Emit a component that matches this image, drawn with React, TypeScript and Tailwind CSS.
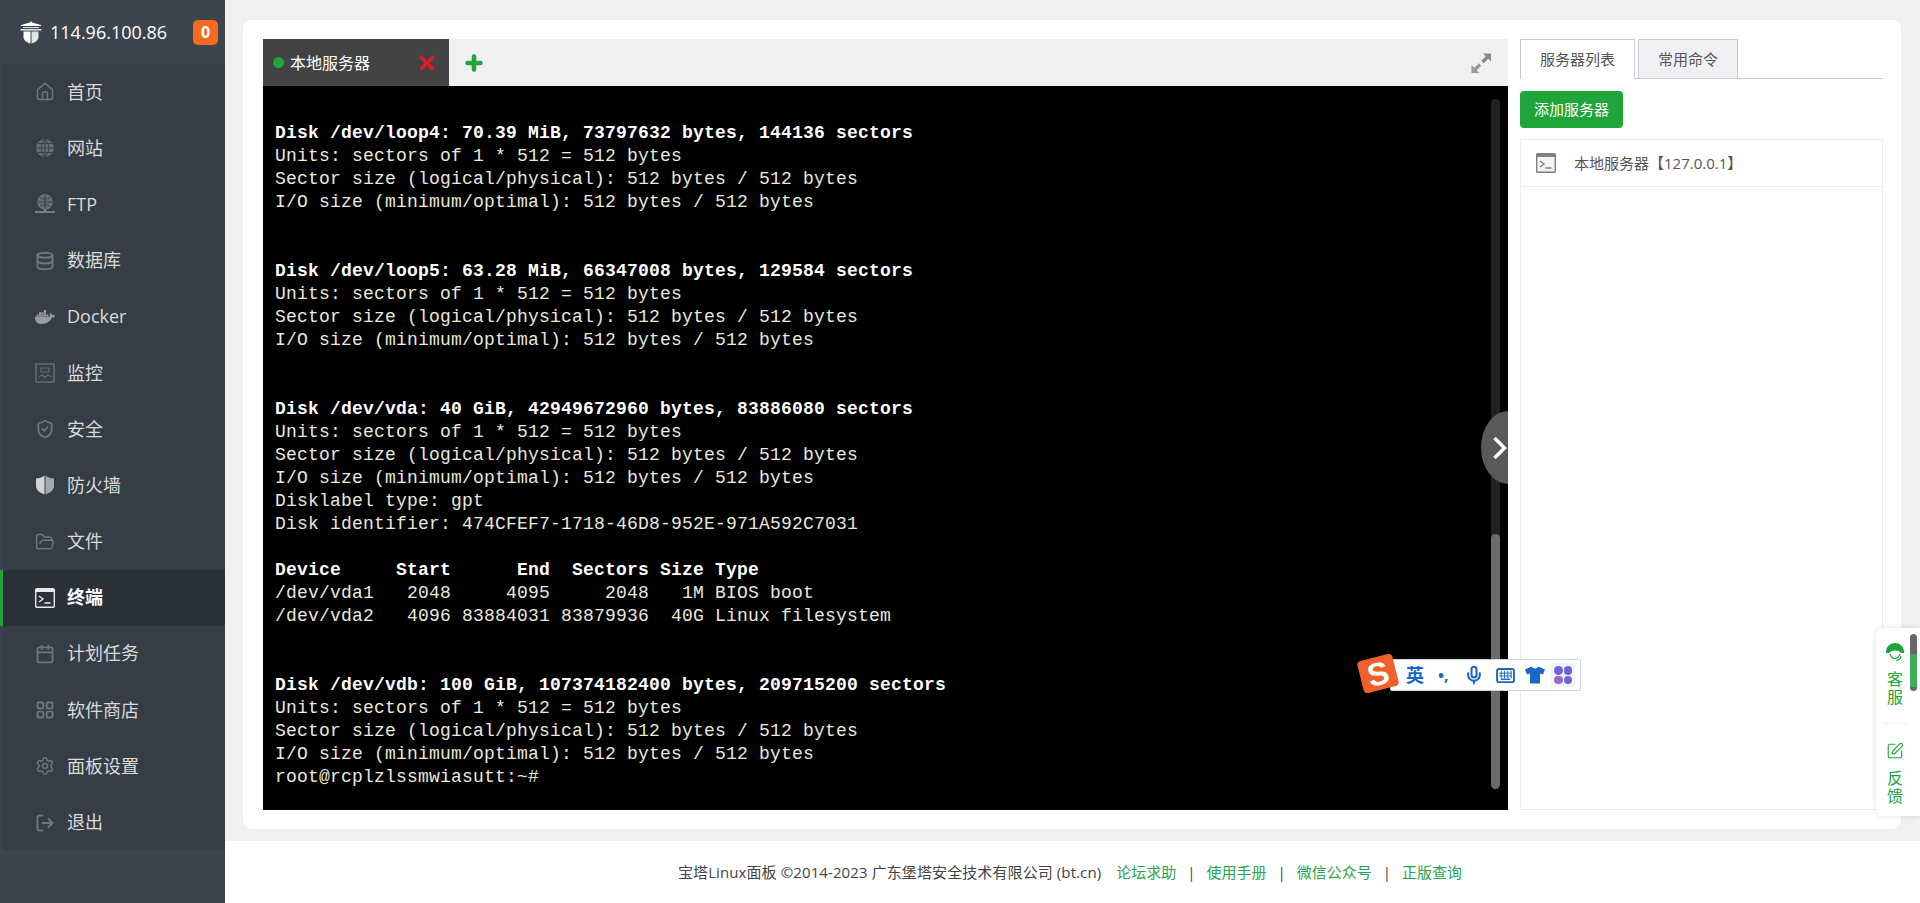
import React from 'react';
import { Home, Database, ShieldCheck, FolderOpen, Calendar, LayoutGrid, Settings, LogOut, X, Plus, Mic, SquarePen } from 'lucide-react';
import { FaDocker } from 'react-icons/fa';

const FONT = "font-['Open_Sans','Noto_Sans_CJK_SC',sans-serif]";

const LogoIcon = () => (
  <svg viewBox="0 0 24 24" className="w-[24px] h-[24px]" fill="#fff">
    <path d="M12 1l1 1.600 9 2.400v1.100H2V5l9-2.400z" />
    <path d="M4 7.200h16v.900H4z" />
    <path d="M1.500 9.200h21v1.300h-21z" />
    <path d="M4.500 11.500h7v12c-3.500-.800-6-2.800-7-5.500z" />
    <path d="M12.500 11.500h7V18c-1 2.700-3.500 4.700-7 5.500z" opacity=".85" />
  </svg>
);

const GlobeIcon = () => (
  <svg viewBox="0 0 20 20" className="w-[20px] h-[20px]" fill="none">
    <circle cx="10" cy="10" r="9" fill="#666c72" />
    <path d="M1 10h18M10 1v18M3 5.500h14M3 14.500h14M10 1c-5 5-5 13 0 18M10 1c5 5 5 13 0 18" stroke="#363d44" strokeWidth="0.900" />
  </svg>
);

const FtpIcon = () => (
  <svg viewBox="0 0 20 20" className="w-[20px] h-[20px]" fill="none" stroke="#6f757b" strokeWidth="1.400">
    <circle cx="10" cy="8" r="7" fill="#666c72" />
    <path d="M3 8h14M10 1v14M5 3.500c3 2 7 2 10 0M5 12.500c3-2 7-2 10 0" stroke="#363d44" strokeWidth="0.900" />
    <path d="M0 18h20M10 15v3" strokeWidth="1.500" stroke="#8a8f94" />
  </svg>
);

const MonitorIcon = () => (
  <svg viewBox="0 0 20 20" className="w-[20px] h-[20px]" fill="none" stroke="#666c72" strokeWidth="1.500">
    <rect x="1" y="1" width="18" height="18" />
    <path d="M6 5h8v4H6zM3.500 14l3.500-2 3 2.500 3-2.500 3.500 2" strokeWidth="1.200" />
  </svg>
);

const HalfShieldIcon = () => (
  <svg viewBox="0 0 20 20" className="w-[20px] h-[20px]">
    <path d="M9.500 0.500v19C5 18 1 15 1 11V3.500C4 3.500 7 2.500 9.500 0.500z" fill="#d2d3d4" />
    <path d="M10.500 0.500c2.500 2 5.500 3 8.500 3V11c0 4-4 7-8.500 8.500z" fill="#a4a7aa" />
  </svg>
);

const TerminalIcon = ({ active }: { active?: boolean }) => (
  <svg viewBox="0 0 20 20" className="w-[20px] h-[20px]" fill="none">
    <rect x="0.700" y="0.700" width="18.600" height="18.600" rx="1" stroke={active ? '#e8e8e8' : '#808080'} strokeWidth="1.400" fill={active ? '#2c3138' : '#f4f4f4'} />
    <path d="M0.700 1h18.600v3H0.700z" fill={active ? '#e8e8e8' : '#808080'} />
    <path d="M4 8l4 3-4 3M9.500 15h6" stroke={active ? '#e8e8e8' : '#808080'} strokeWidth="1.400" />
  </svg>
);

const FullscreenIcon = () => (
  <svg viewBox="0 0 22 22" className="w-[22px] h-[22px]" fill="#8a8a8a">
    <path d="M13 1.500h8v8l-2.800-2.800-4.500 4.500-2.400-2.400 4.500-4.500z" />
    <path d="M9.500 21H1.500v-8l2.800 2.800 4.500-4.500 2.400 2.400-4.500 4.500z" opacity=".85" />
  </svg>
);

const KeyboardIcon = () => (
  <svg viewBox="0 0 20 16" className="w-[19px] h-[15px]" fill="none" stroke="#1767c4">
    <rect x="1" y="1" width="18" height="14" rx="2" strokeWidth="2" />
    <path d="M3 5.500h14M3 8.500h14M5.500 3v8M9 3v8M12.500 3v8M16 3v8" strokeWidth="1" />
    <path d="M5 12h10" strokeWidth="1.500" />
  </svg>
);

const TshirtIcon = () => (
  <svg viewBox="0 0 20 18" className="w-[20px] h-[18px]" fill="#1767c4">
    <path d="M6.500 0.500c1 1.500 2 2 3.500 2s2.500-.500 3.500-2L20 3.500l-2 5-3-1v10H5v-10l-3 1-2-5z" />
  </svg>
);

const HeadsetIcon = () => (
  <svg viewBox="0 0 20 20" className="w-[20px] h-[20px]">
    <path d="M1 8a8.500 7.500 0 0 1 18 0v2h-3c-2-3-6-3-9-2-1 .300-2 1-3 2H1z" fill="#20a53a" />
    <path d="M5 11c1 3 3 4.500 5 4.500s4-1.500 5-4.500" fill="none" stroke="#20a53a" strokeWidth="1.200" />
    <path d="M16 13c0 3-2 4-5 4.500" fill="none" stroke="#20a53a" strokeWidth="1.200" />
  </svg>
);

const icon = 'w-[20px] h-[20px] text-[#6f757b]';
const menu = [
  { label: '首页', icon: <Home className={icon} strokeWidth={1.800} /> },
  { label: '网站', icon: <GlobeIcon /> },
  { label: 'FTP', icon: <FtpIcon /> },
  { label: '数据库', icon: <Database className={icon} strokeWidth={2.400} /> },
  { label: 'Docker', icon: <FaDocker className="w-[20px] h-[20px] text-[#9a9ea2]" /> },
  { label: '监控', icon: <MonitorIcon /> },
  { label: '安全', icon: <ShieldCheck className={icon} strokeWidth={2.200} /> },
  { label: '防火墙', icon: <HalfShieldIcon /> },
  { label: '文件', icon: <FolderOpen className={icon} strokeWidth={1.800} /> },
  { label: '终端', icon: <TerminalIcon active />, active: true },
  { label: '计划任务', icon: <Calendar className={icon} strokeWidth={2.200} /> },
  { label: '软件商店', icon: <LayoutGrid className={icon} strokeWidth={2.200} /> },
  { label: '面板设置', icon: <Settings className={icon} strokeWidth={1.800} /> },
  { label: '退出', icon: <LogOut className={icon} strokeWidth={2.200} /> },
];

const disk = (title: string) => [
  { t: title, b: true },
  { t: 'Units: sectors of 1 * 512 = 512 bytes' },
  { t: 'Sector size (logical/physical): 512 bytes / 512 bytes' },
  { t: 'I/O size (minimum/optimal): 512 bytes / 512 bytes' },
];
const blank = { t: ' ' };

const lines: { t: string; b?: boolean }[] = [
  ...disk('Disk /dev/loop4: 70.39 MiB, 73797632 bytes, 144136 sectors'),
  blank,
  blank,
  ...disk('Disk /dev/loop5: 63.28 MiB, 66347008 bytes, 129584 sectors'),
  blank,
  blank,
  ...disk('Disk /dev/vda: 40 GiB, 42949672960 bytes, 83886080 sectors'),
  { t: 'Disklabel type: gpt' },
  { t: 'Disk identifier: 474CFEF7-1718-46D8-952E-971A592C7031' },
  blank,
  { t: 'Device     Start      End  Sectors Size Type', b: true },
  { t: '/dev/vda1   2048     4095     2048   1M BIOS boot' },
  { t: '/dev/vda2   4096 83884031 83879936  40G Linux filesystem' },
  blank,
  blank,
  ...disk('Disk /dev/vdb: 100 GiB, 107374182400 bytes, 209715200 sectors'),
  { t: 'root@rcplzlssmwiasutt:~#' },
];

const Sidebar = () => (
  <aside className="w-[225px] shrink-0 h-full bg-[#3c444d] flex flex-col">
    <div className="h-[64px] flex items-center pl-[19px] pr-[7px]">
      <LogoIcon />
      <span className="ml-[7px] text-[18px] text-white">114.96.100.86</span>
      <span className="ml-auto w-[25px] h-[25px] rounded-[5px] bg-[#f7691f] text-white text-[16px] font-bold flex items-center justify-center">0</span>
    </div>
    <nav className="h-[786px] bg-[#363d44] flex flex-col">
      {menu.map((m) => (
        <a
          key={m.label}
          className={`h-[56.2px] shrink-0 flex items-center pl-[32px] border-l-[3px] text-[18px] ${
            m.active ? 'border-[#20a53a] bg-[#2c3138] text-white font-semibold' : 'border-[#3c444d] text-[#d8dadc]'
          }`}
        >
          <span className="w-[32px] shrink-0">{m.icon}</span>
          {m.label}
        </a>
      ))}
    </nav>
  </aside>
);

const Terminal = () => (
  <div className="flex-1 min-w-0 flex flex-col">
    <div className="h-[47px] bg-[#f0f0f0] flex items-center">
      <div className="w-[186px] h-full bg-[#434343] flex items-center pl-[10px] text-white text-[16px]">
        <span className="w-[11px] h-[11px] rounded-full bg-[#20a53a] mr-[6px]" />
        本地服务器
        <X className="ml-auto mr-[11px] w-[22px] h-[22px] text-[#e01b24]" strokeWidth={4} />
      </div>
      <Plus className="ml-[14px] w-[22px] h-[22px] text-[#20a53a]" strokeWidth={5} />
      <span className="ml-auto mr-[16px]"><FullscreenIcon /></span>
    </div>
    <div className="relative flex-1 bg-black pt-[36px] pl-[12px] font-['Liberation_Mono',monospace] text-[18px] tracking-[0.2px] leading-[23px] text-[#e9e9dc] overflow-hidden">
      {lines.map((l, i) => (
        <div key={i} className={`whitespace-pre ${l.b ? 'font-bold text-white' : ''}`}>
          {l.t}
        </div>
      ))}
      {/* scrollbar */}
      <div className="absolute right-[8px] top-[13px] bottom-[21px] w-[9px] rounded-full bg-[#222] flex flex-col justify-end">
        <div className="h-[255px] rounded-full bg-[#6b6b6b]" />
      </div>
      {/* collapse toggle */}
      <div className="absolute right-0 top-[325px] w-[27px] h-[73px] bg-[#595959] rounded-tl-[100%_50%] rounded-bl-[100%_50%] flex items-center justify-end text-white">
        <svg viewBox="0 0 14 24" className="w-[14px] h-[24px] mr-[1px]" fill="none" stroke="#fff" strokeWidth="3.500">
          <path d="M1.500 2l10 10-10 10" />
        </svg>
      </div>
    </div>
  </div>
);

const ServerPanel = () => (
  <div className="w-[363px] shrink-0 ml-[12px] flex flex-col text-[15px]">
    <div className="h-[40px] flex border-b-[1px] border-[#c9c9d3] gap-[3px]">
      <div className="w-[115px] h-[40px] bg-white border-[1px] border-b-0 border-[#c9c9d3] flex items-center justify-center text-[#555]">服务器列表</div>
      <div className="w-[100px] h-[39px] bg-[#f0f0f3] border-[1px] border-b-0 border-[#c9c9d3] flex items-center justify-center text-[#555]">常用命令</div>
    </div>
    <button className="mt-[12px] w-[103px] h-[37px] rounded-[4px] bg-[#20a53a] text-white flex items-center justify-center">添加服务器</button>
    <div className="mt-[11px] flex-1 border-[1px] border-[#ececec]">
      <div className="h-[47px] border-b-[1px] border-[#ececec] flex items-center pl-[15px] text-[#555]">
        <TerminalIcon />
        <span className="ml-[18px]">本地服务器【127.0.0.1】</span>
      </div>
    </div>
  </div>
);

const ImeBar = () => (
  <div className="absolute left-[1360px] top-[654px] h-[38px] flex items-center">
    <div className="absolute left-[30px] top-[5px] w-[191px] h-[32px] bg-white border-[1px] border-[#c8d4ea] rounded-[2px]" />
    <div className="relative w-[36px] h-[33px] bg-[#f0602a] rounded-[4px] -rotate-[14deg] flex items-center justify-center text-white text-[32px] leading-none font-black font-['Liberation_Sans',sans-serif]">S</div>
    <div className="relative ml-[10px] flex items-center text-[#1767c4] mt-[4px]">
      <span className="text-[18px] font-bold leading-none">英</span>
      <span className="ml-[14px] w-[18px] text-[16px] font-bold leading-none">•,</span>
      <Mic className="ml-[8px] w-[20px] h-[20px]" strokeWidth={2.500} />
      <span className="ml-[12px]"><KeyboardIcon /></span>
      <span className="ml-[10px]"><TshirtIcon /></span>
      <div className="w-[24px] h-[24px] ml-[6px] bg-[#eef5fb] grid grid-cols-2 gap-[1px] p-[3px]">
        <span className="rounded-full bg-[#6f62d6]" />
        <span className="rounded-full bg-[#6f62d6]" />
        <span className="rounded-full bg-[#9a68c4]" />
        <span className="rounded-full bg-[#6f62d6]" />
      </div>
    </div>
  </div>
);

const FloatHelp = () => (
  <div className="absolute right-0 top-[628px] w-[44px] h-[188px] bg-white rounded-l-[8px] shadow-[0_0_6px_rgba(0,0,0,0.12)] text-[#20a53a] text-[16px] leading-[18px] flex flex-col items-center pr-[6px]">
    <div className="mt-[15px]"><HeadsetIcon /></div>
    <div className="mt-[7px] w-[16px] text-center">客服</div>
    <div className="mt-[17px] w-[24px] border-t-[1px] border-[#eee]" />
    <SquarePen className="mt-[18px] w-[18px] h-[18px]" strokeWidth={1.500} />
    <div className="mt-[9px] w-[16px] text-center">反馈</div>
    <div className="absolute right-[3px] top-[6px] w-[7px] h-[57px] rounded-full bg-[#666] overflow-hidden">
      <div className="mt-[20px] h-[33px] bg-[#3fae5a]" />
    </div>
  </div>
);

export default function App() {
  return (
    <div className={`relative flex h-[903px] w-[1920px] overflow-hidden bg-white ${FONT}`}>
      <Sidebar />
      <div className="flex-1 min-w-0 flex flex-col">
        <main className="h-[841px] bg-[#f0f0f0] pt-[20px] pl-[18px] pr-[19px] pb-[12px]">
          <div className="h-full bg-white rounded-[8px] pt-[19px] pb-[19px] pl-[20px] pr-[18px] flex">
            <Terminal />
            <ServerPanel />
          </div>
        </main>
        <footer className="flex-1 flex items-center justify-center text-[15px] text-[#444] pr-[5px]">
          <span className="tracking-[0.1px]">宝塔Linux面板 ©2014-2023 广东堡塔安全技术有限公司 (bt.cn)</span>
          <a className="ml-[15px] text-[#2ba44a]">论坛求助</a>
          <span className="mx-[11px]">|</span>
          <a className="text-[#2ba44a]">使用手册</a>
          <span className="mx-[11px]">|</span>
          <a className="text-[#2ba44a]">微信公众号</a>
          <span className="mx-[11px]">|</span>
          <a className="text-[#2ba44a]">正版查询</a>
        </footer>
      </div>
      <ImeBar />
      <FloatHelp />
    </div>
  );
}
